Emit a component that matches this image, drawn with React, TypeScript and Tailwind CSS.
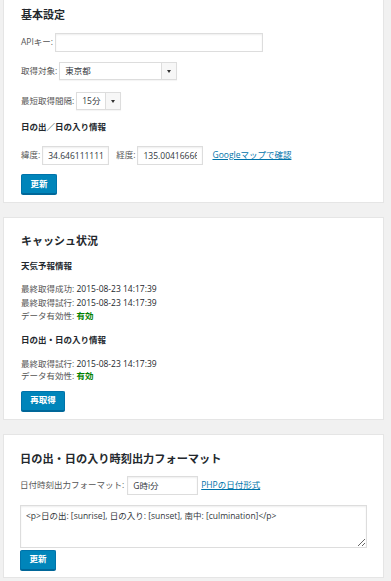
import React from 'react';

const font = { fontFamily: '"Open Sans", "Noto Sans CJK JP", sans-serif' };

function Button({ label, wide }: { label: string; wide?: boolean }) {
  return (
    <button
      className={`h-[20px] ${wide ? 'w-[44px]' : 'w-[36px]'} rounded-[2px] border border-[#0073aa] border-b-[#006799] bg-[#0085ba] text-[8.5px] font-semibold leading-none text-white shadow-[0_1px_0_#006799]`}
    >
      {label}
    </button>
  );
}

function TextInput({ value, className }: { value?: string; className: string }) {
  return (
    <input
      type="text"
      defaultValue={value}
      className={`h-[19px] border border-[#ddd] bg-white px-[5px] text-[8.5px] text-[#32373c] shadow-[inset_0_1px_2px_rgba(0,0,0,0.07)] outline-none ${className}`}
    />
  );
}

function FakeSelect({ value, width }: { value: string; width: string }) {
  return (
    <div className={`flex h-[18px] ${width} border border-[#ddd] bg-white shadow-[0_1px_1px_rgba(0,0,0,0.04)]`}>
      <span className="flex-1 pl-[5px] text-[8.5px] leading-[16px] text-[#32373c]">{value}</span>
      <span className="flex w-[15px] items-center justify-center border-l border-[#ddd] bg-[#f7f7f7]">
        <span className="h-0 w-0 border-x-[2px] border-t-[3px] border-x-transparent border-t-[#333]" />
      </span>
    </div>
  );
}

function Label({ children, className = '' }: { children: React.ReactNode; className?: string }) {
  return <span className={`text-[8.5px] text-[#555] ${className}`}>{children}</span>;
}

export default function App() {
  return (
    <div className="min-h-[581px] w-[391px] overflow-hidden bg-[#f1f1f1] pl-[3px] pr-[7px] text-[8.5px]" style={font}>
      {/* 基本設定 */}
      <section className="flex flex-col items-start border border-t-0 border-[#e5e5e5] bg-white pb-[8px] pl-[17px] pt-[8px]">
        <h2 className="text-[11px] font-bold leading-[14px] text-[#23282d]">基本設定</h2>
        <div className="mt-[11px] flex items-center gap-[2px]">
          <Label>APIキー:</Label>
          <TextInput className="w-[208px]" />
        </div>
        <div className="mt-[10px] flex items-center gap-[2px]">
          <Label>取得対象:</Label>
          <FakeSelect value="東京都" width="w-[118px]" />
        </div>
        <div className="mt-[12px] flex items-center gap-[2px]">
          <Label>最短取得間隔:</Label>
          <FakeSelect value="15分" width="w-[45px]" />
        </div>
        <h3 className="mt-[10px] text-[8.5px] font-bold leading-[14px] text-[#23282d]">日の出／日の入り情報</h3>
        <div className="mt-[12px] flex items-center">
          <Label>緯度:</Label>
          <TextInput value="34.6461111111" className="ml-[2px] w-[67px]" />
          <Label className="ml-[7px]">経度:</Label>
          <TextInput value="135.0041666666" className="ml-[2px] w-[66px]" />
          <a className="ml-[9px] text-[8.5px] text-[#0073aa] underline">Googleマップで確認</a>
        </div>
        <div className="mt-[9px] flex">
          <Button label="更新" />
        </div>
      </section>

      {/* キャッシュ状況 */}
      <section className="mt-[14px] flex flex-col items-start border border-[#e5e5e5] bg-white pb-[8px] pl-[17px] pt-[16px]">
        <h2 className="text-[11px] font-bold leading-[14px] text-[#23282d]">キャッシュ状況</h2>
        <h3 className="mt-[11px] text-[8.5px] font-bold leading-[14px] text-[#23282d]">天気予報情報</h3>
        <div className="mt-[9px] text-[8.5px] leading-[13.5px] text-[#555]">
          <p>最終取得成功: <span className="text-[#23282d]">2015-08-23 14:17:39</span></p>
          <p>最終取得試行: <span className="text-[#23282d]">2015-08-23 14:17:39</span></p>
          <p>データ有効性: <span className="font-bold text-[#008000]">有効</span></p>
        </div>
        <h3 className="mt-[10px] text-[8.5px] font-bold leading-[14px] text-[#23282d]">日の出・日の入り情報</h3>
        <div className="mt-[11px] text-[8.5px] leading-[12px] text-[#555]">
          <p>最終取得試行: <span className="text-[#23282d]">2015-08-23 14:17:39</span></p>
          <p>データ有効性: <span className="font-bold text-[#008000]">有効</span></p>
        </div>
        <div className="mt-[9px] flex">
          <Button label="再取得" wide />
        </div>
      </section>

      {/* 出力フォーマット */}
      <section className="mt-[14px] flex flex-col items-start border border-[#e5e5e5] bg-white pb-[7px] pl-[16px] pr-[16px] pt-[17px]">
        <h2 className="text-[11.2px] font-bold leading-[14px] text-[#23282d]">日の出・日の入り時刻出力フォーマット</h2>
        <div className="mt-[10px] flex items-center">
          <Label>日付時刻出力フォーマット:</Label>
          <TextInput value="G時i分" className="ml-[3px] w-[71px]" />
          <a className="ml-[3px] text-[8.5px] text-[#0073aa] underline">PHPの日付形式</a>
        </div>
        <textarea
          defaultValue="<p>日の出: [sunrise], 日の入り: [sunset], 南中: [culmination]</p>"
          className="mt-[10px] block h-[43px] w-[347px] border border-[#ddd] px-[5px] py-[4px] text-[8.5px] leading-[12px] text-[#32373c] shadow-[inset_0_1px_2px_rgba(0,0,0,0.07)] outline-none"
        />
        <div className="mt-[2px] flex">
          <Button label="更新" />
        </div>
      </section>
    </div>
  );
}
